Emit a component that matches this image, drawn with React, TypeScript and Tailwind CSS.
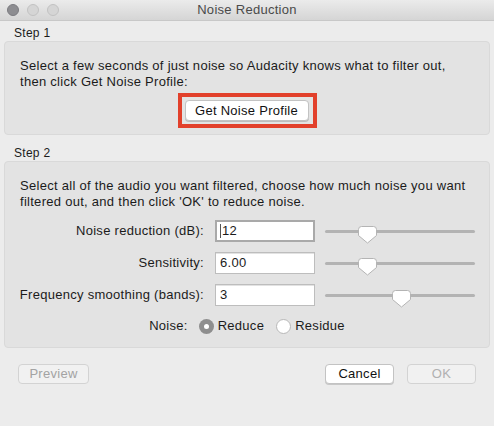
import React from 'react';

function Thumb() {
  return (
    <svg width="19" height="18" viewBox="0 0 19 18" className="absolute top-[-4px]">
      <path
        d="M3.5 0.5 H15.5 Q18.5 0.5 18.5 3.5 V9.5 L9.5 17 L0.5 9.5 V3.5 Q0.5 0.5 3.5 0.5 Z"
        fill="#ffffff"
        stroke="#b4b4b4"
      />
    </svg>
  );
}

function Slider({ pos }: { pos: number }) {
  return (
    <div className="relative w-[150px] h-[3px] rounded-full bg-[#b3b3b3]">
      <div className="absolute" style={{ left: pos - 9 }}>
        <Thumb />
      </div>
    </div>
  );
}

function Row({ label, value, pos, focused }: { label: string; value: string; pos: number; focused?: boolean }) {
  return (
    <div className="flex items-center h-[22px]">
      <div className="w-[185px] shrink-0 flex justify-end pr-px whitespace-nowrap">{label}</div>
      <div
        className={`relative ml-[10px] w-[100px] h-[22px] bg-white flex items-center pl-[3px] ${
          focused ? 'border-2 border-[#a9a9a9]' : 'border border-[#bdbdbd] shadow-[inset_0_1px_0_#e2e2e2]'
        }`}
      >
        {focused && <span className="w-px h-[14px] bg-[#555] mr-px" />}
        <span className={focused ? '' : 'pl-px'}>{value}</span>
      </div>
      <div className="ml-[10px] flex items-center">
        <Slider pos={pos} />
      </div>
    </div>
  );
}

export default function App() {
  return (
    <div className="w-[494px] h-[426px] bg-[#ececec] text-[13px] tracking-[0.28px] text-[#1b1b1b] font-['Liberation_Sans',Arial,sans-serif] overflow-hidden">
      {/* title bar */}
      <div className="relative h-[21px] border-b border-[#c8c8c8] bg-gradient-to-b from-[#ebebeb] to-[#d5d5d5] flex items-center">
        <div className="flex items-center gap-[8px] pl-[7px]">
          <span className="w-[12px] h-[12px] rounded-full bg-[#8d8d91] border border-[#7b7b80]" />
          <span className="w-[12px] h-[12px] rounded-full bg-[#d5d5d5] border border-[#c2c2c2]" />
          <span className="w-[12px] h-[12px] rounded-full bg-[#d5d5d5] border border-[#c2c2c2]" />
        </div>
        <div className="absolute inset-0 flex items-center justify-center text-[13px] text-[#4a4a4a]">
          Noise Reduction
        </div>
      </div>

      <div className="px-[4px]">
        {/* step 1 */}
        <div className="h-[20px] pt-[5px] pl-[10px] text-[12px] leading-[14px]">Step 1</div>
        <div className="h-[94px] rounded-[4px] border border-[#d9d9d9] bg-[#e3e3e3] pt-[16px] pl-[15px] leading-[16px] whitespace-nowrap">
          <p>Select a few seconds of just noise so Audacity knows what to filter out,</p>
          <p>then click Get Noise Profile:</p>
          <div className="mt-[3px] flex justify-center pr-[15px]">
            <div className="w-[139px] h-[35px] border-[4px] border-[#e2402b] p-[3px]">
              <button className="w-[124px] h-[21px] rounded-[4px] bg-white border border-[#c3c3c3] shadow-[0_1px_0_#bdbdbd] text-[13px] leading-[19px] text-[#111]">
                Get Noise Profile
              </button>
            </div>
          </div>
        </div>

        {/* step 2 */}
        <div className="h-[26px] pt-[11px] pl-[10px] text-[12px] leading-[14px]">Step 2</div>
        <div className="h-[187px] rounded-[4px] border border-[#d9d9d9] bg-[#e3e3e3] pt-[16px] pl-[15px] leading-[16px] whitespace-nowrap">
          <p>Select all of the audio you want filtered, choose how much noise you want</p>
          <p>filtered out, and then click 'OK' to reduce noise.</p>
          <div className="mt-[10px] flex flex-col gap-[10px]">
            <Row label="Noise reduction (dB):" value="12" pos={42} focused />
            <Row label="Sensitivity:" value="6.00" pos={42} />
            <Row label="Frequency smoothing (bands):" value="3" pos={76} />
          </div>
          <div className="mt-[12px] h-[16px] flex items-center justify-center pr-[15px]">
            <span className="mr-[11px]">Noise:</span>
            <span className="w-[15px] h-[15px] rounded-full bg-[#8e8e8e] flex items-center justify-center">
              <span className="w-[5px] h-[5px] rounded-full bg-white" />
            </span>
            <span className="ml-[4px]">Reduce</span>
            <span className="ml-[12px] w-[15px] h-[15px] rounded-full bg-white border border-[#b8b8b8]" />
            <span className="ml-[4px]">Residue</span>
          </div>
        </div>
      </div>

      {/* buttons */}
      <div className="mt-[16px] px-[18px] flex items-center">
        <button className="w-[71px] h-[20px] rounded-[4px] border border-[#d3d3d3] bg-[#f1f1f1] text-[#a3a3a3] leading-[18px]">
          Preview
        </button>
        <div className="flex-1" />
        <button className="w-[69px] h-[20px] rounded-[4px] border border-[#c3c3c3] bg-white shadow-[0_1px_0_#c8c8c8] text-[#111] leading-[18px]">
          Cancel
        </button>
        <button className="ml-[13px] w-[69px] h-[20px] rounded-[4px] border border-[#d3d3d3] bg-[#f1f1f1] text-[#b0b0b0] leading-[18px]">
          OK
        </button>
      </div>
    </div>
  );
}
